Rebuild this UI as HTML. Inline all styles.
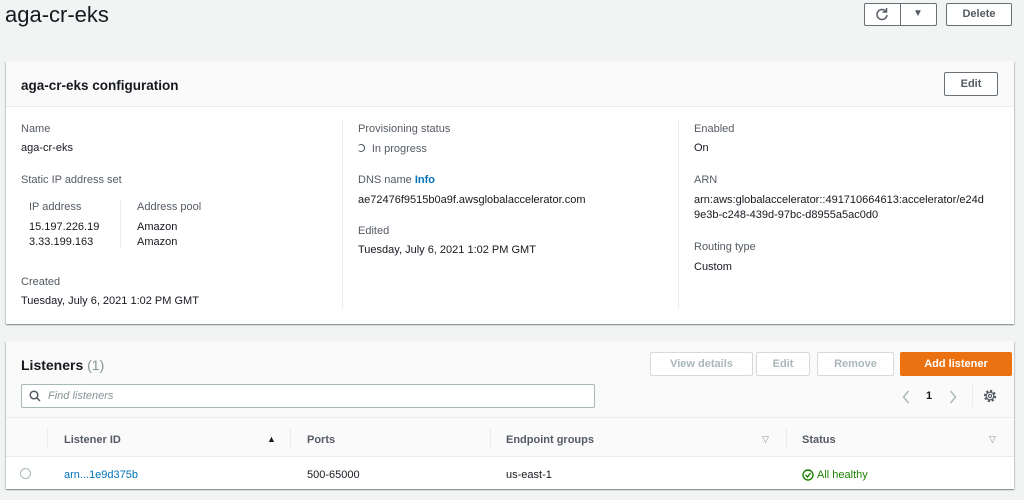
<!DOCTYPE html>
<html><head><meta charset="utf-8"><style>
*{box-sizing:border-box;margin:0;padding:0}
body{width:1024px;height:500px;overflow:hidden;background:#f2f3f3;font-family:"Liberation Sans",sans-serif;color:#16191f;position:relative;font-size:11px}
.a{position:absolute;white-space:nowrap}
.btn{position:absolute;border:1px solid #687078;background:#fff;border-radius:2px;font-weight:bold;font-size:11px;color:#545b64;text-align:center}
.dis{border-color:#d5dbdb;color:#aab7b8;background:#fff}
.panel{position:absolute;left:6px;width:1008px;background:#fff;box-shadow:0 1px 1px rgba(0,28,36,.3),1px 1px 1px rgba(0,28,36,.15),-1px 1px 1px rgba(0,28,36,.15)}
.lab{color:#545b64}
.vl{position:absolute;width:1px;background:#eaeded}
.panel .a{margin-top:1px}
</style></head><body>
<div class="a" style="left:5px;top:2px;font-size:22px;color:#16191f">aga-cr-eks</div>
<div class="btn" style="left:864px;top:3px;width:73px;height:23px"></div>
<div class="a" style="left:900px;top:3px;width:1px;height:23px;background:#687078"></div>
<svg class="a" style="left:875px;top:7px" width="14" height="14" viewBox="0 0 14 14"><path d="M11 4.5A5 5 0 1 0 12 8" fill="none" stroke="#545b64" stroke-width="1.5"/><path d="M11.5 1v4h-4" fill="none" stroke="#545b64" stroke-width="1.5"/></svg>
<div class="a" style="left:913px;top:8px;font-size:10px;color:#545b64">▼</div>
<div class="btn" style="left:946px;top:3px;width:66px;height:23px;line-height:21px">Delete</div>

<div class="panel" style="top:61px;height:263px">
 <div style="height:46px;background:#fafafa;border-bottom:1px solid #eaeded"></div>
 <div class="a" style="left:15px;top:16px;font-size:13.5px;font-weight:bold">aga-cr-eks configuration</div>
 <div class="btn" style="left:938px;top:11px;width:54px;height:24px;line-height:22px">Edit</div>
 <div class="vl" style="left:336px;top:58px;height:190px"></div>
 <div class="vl" style="left:672px;top:58px;height:190px"></div>
 <div class="vl" style="left:114px;top:138px;height:50px"></div>
 <div class="a lab" style="left:15px;top:61px">Name</div>
 <div class="a" style="left:15px;top:80px">aga-cr-eks</div>
 <div class="a lab" style="left:15px;top:112px">Static IP address set</div>
 <div class="a lab" style="left:23px;top:139px">IP address</div>
 <div class="a" style="left:23px;top:159px">15.197.226.19</div>
 <div class="a" style="left:23px;top:174px">3.33.199.163</div>
 <div class="a lab" style="left:131px;top:139px">Address pool</div>
 <div class="a" style="left:131px;top:159px">Amazon</div>
 <div class="a" style="left:131px;top:174px">Amazon</div>
 <div class="a lab" style="left:15px;top:214px">Created</div>
 <div class="a" style="left:15px;top:233px">Tuesday, July 6, 2021 1:02 PM GMT</div>
 <div class="a lab" style="left:352px;top:61px">Provisioning status</div>
 <div class="a lab" style="left:352px;top:80px">&#x2183;&nbsp; In progress</div>
 <div class="a lab" style="left:352px;top:112px">DNS name <span style="color:#0073bb;font-weight:bold">Info</span></div>
 <div class="a" style="left:352px;top:132px">ae72476f9515b0a9f.awsglobalaccelerator.com</div>
 <div class="a lab" style="left:352px;top:163px">Edited</div>
 <div class="a" style="left:352px;top:182px">Tuesday, July 6, 2021 1:02 PM GMT</div>
 <div class="a lab" style="left:688px;top:61px">Enabled</div>
 <div class="a" style="left:688px;top:80px">On</div>
 <div class="a lab" style="left:688px;top:112px">ARN</div>
 <div class="a" style="left:688px;top:132px">arn:aws:globalaccelerator::491710664613:accelerator/e24d</div>
 <div class="a" style="left:688px;top:147px">9e3b-c248-439d-97bc-d8955a5ac0d0</div>
 <div class="a lab" style="left:688px;top:179px">Routing type</div>
 <div class="a" style="left:688px;top:199px">Custom</div>
</div>

<div class="panel" style="top:341px;height:148px">
 <div style="height:77px;background:#fafafa;border-bottom:1px solid #eaeded"></div>
 <div style="height:39px;background:#fafafa;border-bottom:1px solid #eaeded"></div>
 <div class="a" style="left:15px;top:15px;font-size:14px;font-weight:bold">Listeners <span style="color:#879596;font-weight:normal">(1)</span></div>
 <div class="btn dis" style="left:644px;top:11px;width:103px;height:24px;line-height:22px">View details</div>
 <div class="btn dis" style="left:750px;top:11px;width:54px;height:24px;line-height:22px">Edit</div>
 <div class="btn dis" style="left:811px;top:11px;width:77px;height:24px;line-height:22px">Remove</div>
 <div class="btn" style="left:894px;top:11px;width:112px;height:24px;line-height:22px;background:#ec7211;border-color:#ec7211;color:#fff">Add listener</div>
 <div class="a" style="left:15px;top:42px;width:574px;height:24px;border:1px solid #aab7b8;background:#fff;border-radius:2px"></div>
 <svg class="a" style="left:23px;top:48px" width="12" height="12" viewBox="0 0 12 12"><circle cx="5" cy="5" r="3.8" fill="none" stroke="#545b64" stroke-width="1.5"/><path d="M8 8l3 3" stroke="#545b64" stroke-width="1.5"/></svg>
 <div class="a" style="left:42px;top:48px;font-style:italic;color:#879596">Find listeners</div>
 <svg class="a" style="left:896px;top:48px" width="8" height="14" viewBox="0 0 8 14"><path d="M6.5 1L1.5 7l5 6" fill="none" stroke="#aab7b8" stroke-width="1.4"/></svg>
 <div class="a" style="left:920px;top:48px;font-weight:bold">1</div>
 <svg class="a" style="left:943px;top:48px" width="8" height="14" viewBox="0 0 8 14"><path d="M1.5 1l5 6-5 6" fill="none" stroke="#aab7b8" stroke-width="1.4"/></svg>
 <div class="vl" style="left:966px;top:42px;height:24px"></div>
 <svg class="a" style="left:977px;top:47px" width="14" height="14" viewBox="0 0 14 14"><circle cx="7" cy="7" r="5" fill="none" stroke="#545b64" stroke-width="2.2" stroke-dasharray="2.2 1.7"/><circle cx="7" cy="7" r="3.8" fill="#fff" stroke="#545b64" stroke-width="1.2"/><circle cx="7" cy="7" r="1.6" fill="none" stroke="#545b64" stroke-width="1.2"/></svg>
 <div class="vl" style="left:41px;top:87px;height:20px"></div>
 <div class="vl" style="left:284px;top:87px;height:20px"></div>
 <div class="vl" style="left:484px;top:87px;height:20px"></div>
 <div class="vl" style="left:780px;top:87px;height:20px"></div>
 <div class="a" style="left:58px;top:92px;font-weight:bold;color:#545b64">Listener ID</div>
 <div class="a" style="left:261px;top:92px;font-size:9px">▲</div>
 <div class="a" style="left:301px;top:92px;font-weight:bold;color:#545b64">Ports</div>
 <div class="a" style="left:500px;top:92px;font-weight:bold;color:#545b64">Endpoint groups</div>
 <div class="a" style="left:756px;top:92px;font-size:9px;color:#879596">▽</div>
 <div class="a" style="left:796px;top:92px;font-weight:bold;color:#545b64">Status</div>
 <div class="a" style="left:983px;top:92px;font-size:9px;color:#879596">▽</div>
 <div class="a" style="left:14px;top:126px;width:11px;height:11px;border:1px solid #aab7b8;border-radius:50%"></div>
 <div class="a" style="left:58px;top:127px;color:#0073bb">arn...1e9d375b</div>
 <div class="a" style="left:301px;top:127px">500-65000</div>
 <div class="a" style="left:500px;top:127px">us-east-1</div>
 <svg class="a" style="left:796px;top:127px" width="12" height="12" viewBox="0 0 12 12"><circle cx="6" cy="6" r="5" fill="none" stroke="#1d8102" stroke-width="1.4"/><path d="M3.5 6l2 2 3-4" fill="none" stroke="#1d8102" stroke-width="1.4"/></svg>
 <div class="a" style="left:811px;top:127px;color:#1d8102">All healthy</div>
</div>
</body></html>
